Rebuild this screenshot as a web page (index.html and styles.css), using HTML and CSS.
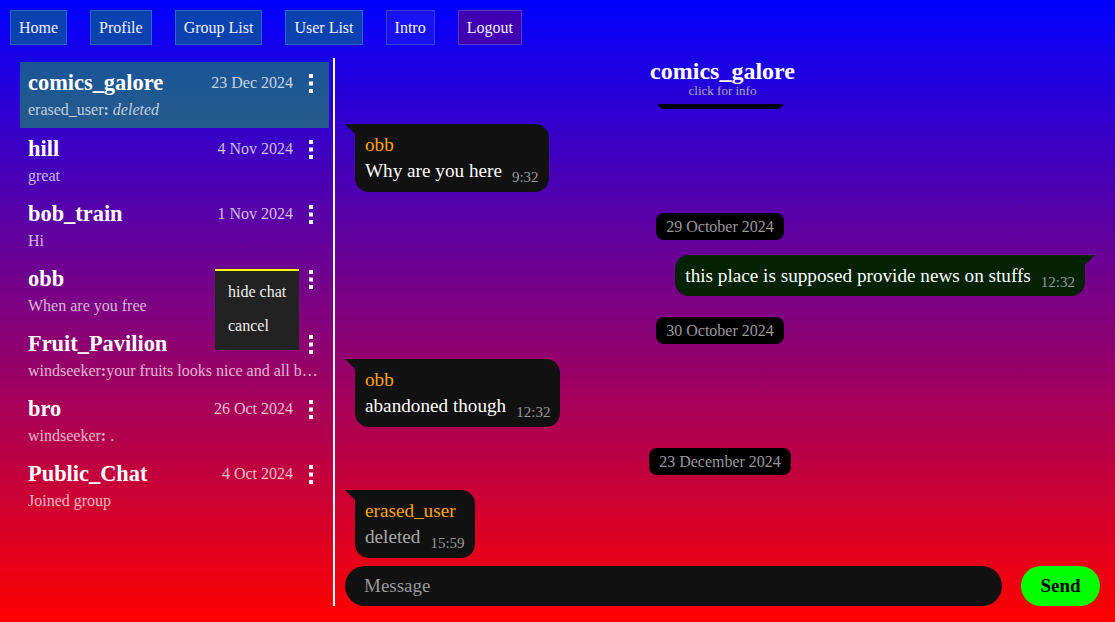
FILE: index.html
```html
<!DOCTYPE html>
<html>
<head>
<meta charset="utf-8">
<title>Chat</title>
<link rel="stylesheet" href="styles.css">
</head>
<body>
<nav class="nav">
  <a class="nav-btn">Home</a>
  <a class="nav-btn">Profile</a>
  <a class="nav-btn">Group List</a>
  <a class="nav-btn">User List</a>
  <a class="nav-btn nav-intro">Intro</a>
  <a class="nav-btn nav-logout">Logout</a>
</nav>
<main class="main">
  <aside class="sidebar">
    <div class="chat-item selected">
      <div class="row1"><span class="name">comics_galore</span><span class="date">23 Dec 2024</span><span class="kebab"><svg width="4" height="19" viewBox="0 0 4 19"><rect x="0" y="0" width="4" height="4" fill="#fff"/><rect x="0" y="7.5" width="4" height="4" fill="#fff"/><rect x="0" y="15" width="4" height="4" fill="#fff"/></svg></span></div>
      <div class="preview">erased_user<b>:</b> <i>deleted</i></div>
    </div>
    <div class="chat-item">
      <div class="row1"><span class="name">hill</span><span class="date">4 Nov 2024</span><span class="kebab"><svg width="4" height="19" viewBox="0 0 4 19"><rect x="0" y="0" width="4" height="4" fill="#fff"/><rect x="0" y="7.5" width="4" height="4" fill="#fff"/><rect x="0" y="15" width="4" height="4" fill="#fff"/></svg></span></div>
      <div class="preview">great</div>
    </div>
    <div class="chat-item">
      <div class="row1"><span class="name">bob_train</span><span class="date">1 Nov 2024</span><span class="kebab"><svg width="4" height="19" viewBox="0 0 4 19"><rect x="0" y="0" width="4" height="4" fill="#fff"/><rect x="0" y="7.5" width="4" height="4" fill="#fff"/><rect x="0" y="15" width="4" height="4" fill="#fff"/></svg></span></div>
      <div class="preview">Hi</div>
    </div>
    <div class="chat-item">
      <div class="row1"><span class="name">obb</span><span class="date"></span><span class="kebab"><svg width="4" height="19" viewBox="0 0 4 19"><rect x="0" y="0" width="4" height="4" fill="#fff"/><rect x="0" y="7.5" width="4" height="4" fill="#fff"/><rect x="0" y="15" width="4" height="4" fill="#fff"/></svg></span></div>
      <div class="preview">When are you free</div>
      <div class="menu">
        <div class="menu-item">hide chat</div>
        <div class="menu-item">cancel</div>
      </div>
    </div>
    <div class="chat-item">
      <div class="row1"><span class="name">Fruit_Pavilion</span><span class="date"></span><span class="kebab"><svg width="4" height="19" viewBox="0 0 4 19"><rect x="0" y="0" width="4" height="4" fill="#fff"/><rect x="0" y="7.5" width="4" height="4" fill="#fff"/><rect x="0" y="15" width="4" height="4" fill="#fff"/></svg></span></div>
      <div class="preview">windseeker<b>:</b>your fruits looks nice and all but where</div>
    </div>
    <div class="chat-item">
      <div class="row1"><span class="name">bro</span><span class="date">26 Oct 2024</span><span class="kebab"><svg width="4" height="19" viewBox="0 0 4 19"><rect x="0" y="0" width="4" height="4" fill="#fff"/><rect x="0" y="7.5" width="4" height="4" fill="#fff"/><rect x="0" y="15" width="4" height="4" fill="#fff"/></svg></span></div>
      <div class="preview">windseeker<b>:</b> .</div>
    </div>
    <div class="chat-item">
      <div class="row1"><span class="name">Public_Chat</span><span class="date">4 Oct 2024</span><span class="kebab"><svg width="4" height="19" viewBox="0 0 4 19"><rect x="0" y="0" width="4" height="4" fill="#fff"/><rect x="0" y="7.5" width="4" height="4" fill="#fff"/><rect x="0" y="15" width="4" height="4" fill="#fff"/></svg></span></div>
      <div class="preview">Joined group</div>
    </div>
  </aside>
  <section class="chat">
    <header class="chat-header">
      <div class="chat-title">comics_galore</div>
      <div class="chat-sub">click for info</div>
    </header>
    <div class="messages">
      <div class="pill pill-clipped"></div>
      <div class="msg in">
        <div class="sender">obb</div>
        <div class="body"><span class="text">Why are you here</span><span class="time">9:32</span></div>
      </div>
      <div class="pill">29 October 2024</div>
      <div class="msg out">
        <div class="body"><span class="text">this place is supposed provide news on stuffs</span><span class="time">12:32</span></div>
      </div>
      <div class="pill">30 October 2024</div>
      <div class="msg in">
        <div class="sender">obb</div>
        <div class="body"><span class="text">abandoned though</span><span class="time">12:32</span></div>
      </div>
      <div class="pill">23 December 2024</div>
      <div class="msg in">
        <div class="sender">erased_user</div>
        <div class="body"><span class="text deleted">deleted</span><span class="time">15:59</span></div>
      </div>
    </div>
    <div class="composer">
      <input class="input" type="text" placeholder="Message">
      <button class="send">Send</button>
    </div>
  </section>
</main>
</body>
</html>
```
FILE: styles.css
```css
* { box-sizing: border-box; }
html, body { height: 100%; }
body {
  margin: 0;
  height: 622px;
  background: linear-gradient(#0000ff, #ff0000);
  font-family: "Liberation Serif", "Times New Roman", serif;
  color: #fff;
  display: flex;
  flex-direction: column;
  overflow: hidden;
}
.nav {
  display: flex;
  gap: 23px;
  padding: 10px 10px 13px;
}
.nav-btn {
  display: block;
  height: 35px;
  line-height: 33px;
  padding: 0 8px;
  font-size: 16px;
  color: #eef0ff;
  background: #0b42b0;
  border: 1px solid #2d62d2;
}
.nav-intro { background: #1812f2; border-color: #3b3fe2; }
.nav-logout { background: #4000b2; border-color: #5a32d2; }

.main {
  flex: 1;
  display: flex;
  padding: 0 0 16px 20px;
  min-height: 0;
}
.sidebar {
  width: 309px;
  padding-top: 4px;
  flex-shrink: 0;
}
.chat-item {
  position: relative;
  height: 65px;
  padding: 6px 10px 5px 8px;
}
.chat-item.selected {
  height: 66px;
  background: linear-gradient(#1a5598, #255a8a);
}
.row1 {
  display: flex;
  align-items: center;
  height: 30px;
}
.name {
  flex: 1;
  font-size: 22.4px;
  font-weight: bold;
  color: #fff;
}
.date {
  font-size: 16px;
  color: rgba(255,255,255,0.75);
}
.kebab {
  width: 16px;
  margin-left: 10px;
  display: flex;
  justify-content: center;
}
.kebab svg { display: block; }
.preview {
  font-size: 16px;
  line-height: 24px;
  color: rgba(255,255,255,0.72);
  white-space: nowrap;
  overflow: hidden;
  text-overflow: ellipsis;
}
.menu {
  position: absolute;
  top: 11px;
  left: 195px;
  width: 84px;
  height: 81px;
  background: #222;
  border-top: 2px solid #ffff00;
  padding-top: 4px;
  z-index: 5;
}
.menu-item {
  height: 34px;
  line-height: 34px;
  padding-left: 13px;
  font-size: 16px;
  color: #eee;
}

.chat {
  flex: 1;
  margin-left: 4px;
  border-left: 2px solid #fff;
  padding: 0 15px 0 10px;
  display: flex;
  flex-direction: column;
  min-width: 0;
}
.chat-header {
  text-align: center;
  padding-bottom: 6px;
}
.chat-title {
  font-size: 24px;
  font-weight: bold;
  line-height: 26px;
}
.chat-sub {
  font-size: 13px;
  line-height: 14px;
  color: #aaa;
}
.messages {
  flex: 1;
  min-height: 0;
  overflow: hidden;
  margin-right: 5px;
  display: flex;
  flex-direction: column;
  align-items: flex-start;
}
.pill {
  align-self: center;
  margin-top: 21px;
  height: 27px;
  line-height: 27px;
  padding: 0 10px;
  font-size: 16px;
  color: #999;
  background: #000;
  border-radius: 8px;
  flex-shrink: 0;
}
.pill-clipped {
  margin-top: -22px;
  width: 127px;
}
.msg {
  position: relative;
  margin-top: 15px;
  padding: 7px 10px 7px;
  background: #111;
  flex-shrink: 0;
}
.msg.in {
  margin-left: 10px;
  border-radius: 0 14px 14px 14px;
}
.msg.out {
  align-self: flex-end;
  margin-right: 10px;
  padding-bottom: 6px;
  background: #022202;
  border-radius: 14px 0 14px 14px;
}
.msg.in::before {
  content: "";
  position: absolute;
  left: -10px;
  top: 0;
  border-top: 10px solid #111;
  border-left: 10px solid transparent;
}
.msg.out::before {
  content: "";
  position: absolute;
  right: -10px;
  top: 0;
  border-top: 10px solid #022202;
  border-right: 10px solid transparent;
}
.sender {
  font-size: 19.2px;
  line-height: 24px;
  margin-top: 2px;
  color: #ffa500;
}
.body {
  display: flex;
  align-items: flex-end;
  height: 28px;
}
.text {
  font-size: 19.2px;
  line-height: 28px;
  color: #fff;
  white-space: nowrap;
}
.text.deleted { color: #aaa; }
.time {
  margin-left: 10px;
  font-size: 15px;
  line-height: 15px;
  color: #999;
}
.composer {
  display: flex;
  gap: 19px;
  margin-top: 7px;
  height: 40px;
  flex-shrink: 0;
}
.input {
  flex: 1;
  height: 40px;
  border: none;
  border-radius: 20px;
  background: #111;
  padding: 0 19px;
  font-family: "Liberation Serif", "Times New Roman", serif;
  font-size: 19px;
  color: #fff;
  outline: none;
}
.input::placeholder { color: #999; }
.send {
  width: 79px;
  height: 40px;
  border: none;
  border-radius: 20px;
  background: #00ff00;
  font-family: "Liberation Serif", "Times New Roman", serif;
  font-size: 19px;
  font-weight: bold;
  color: #000;
}
```
